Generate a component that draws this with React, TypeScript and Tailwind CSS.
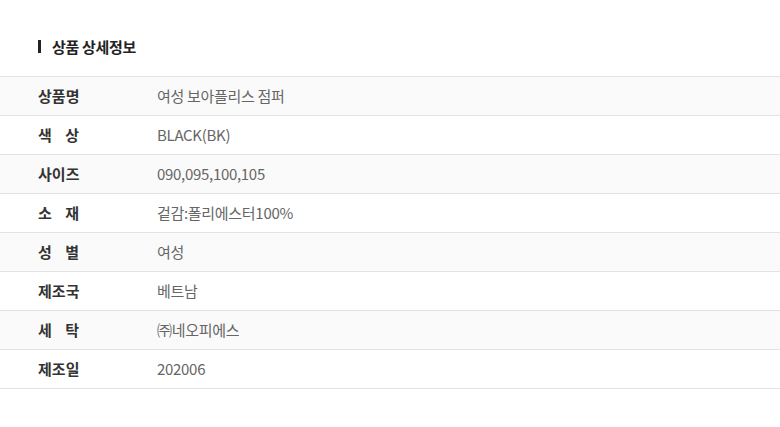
import React from "react";

const rows: { label: string[]; value: string }[] = [
  { label: ["상", "품", "명"], value: "여성 보아플리스 점퍼" },
  { label: ["색", "상"], value: "BLACK(BK)" },
  { label: ["사", "이", "즈"], value: "090,095,100,105" },
  { label: ["소", "재"], value: "겉감:폴리에스터100%" },
  { label: ["성", "별"], value: "여성" },
  { label: ["제", "조", "국"], value: "베트남" },
  { label: ["세", "탁"], value: "㈜네오피에스" },
  { label: ["제", "조", "일"], value: "202006" },
];

export default function App() {
  return (
    <div
      className="w-[780px] h-[427px] bg-white"
      style={{ fontFamily: '"Noto Sans CJK KR", "Noto Sans", sans-serif' }}
    >
      <div className="pt-[36px] pl-[38px] flex items-center h-[59px] pb-[2px]">
        <div className="w-[3px] h-[13px] bg-[#222]" />
        <div className="ml-[11px] text-[15px] font-bold text-[#222] leading-none tracking-[-0.3px]">
          상품 상세정보
        </div>
      </div>
      <div className="mt-[17px] border-t border-[#e3e3e3]">
        {rows.map((r, i) => (
          <div
            key={i}
            className={`flex items-center h-[39px] pb-[2px] border-b border-[#e3e3e3] ${
              i % 2 === 0 ? "bg-[#fafafa]" : "bg-white"
            }`}
          >
            <div className="w-[157px] shrink-0 pl-[38px] flex">
              <div className="w-[41px] flex justify-between text-[15px] font-bold text-[#333] leading-none">
                {r.label.map((c, j) => (
                  <span key={j}>{c}</span>
                ))}
              </div>
            </div>
            <div className="text-[15px] text-[#666] leading-none tracking-[-0.3px]">
              {r.value}
            </div>
          </div>
        ))}
      </div>
    </div>
  );
}
